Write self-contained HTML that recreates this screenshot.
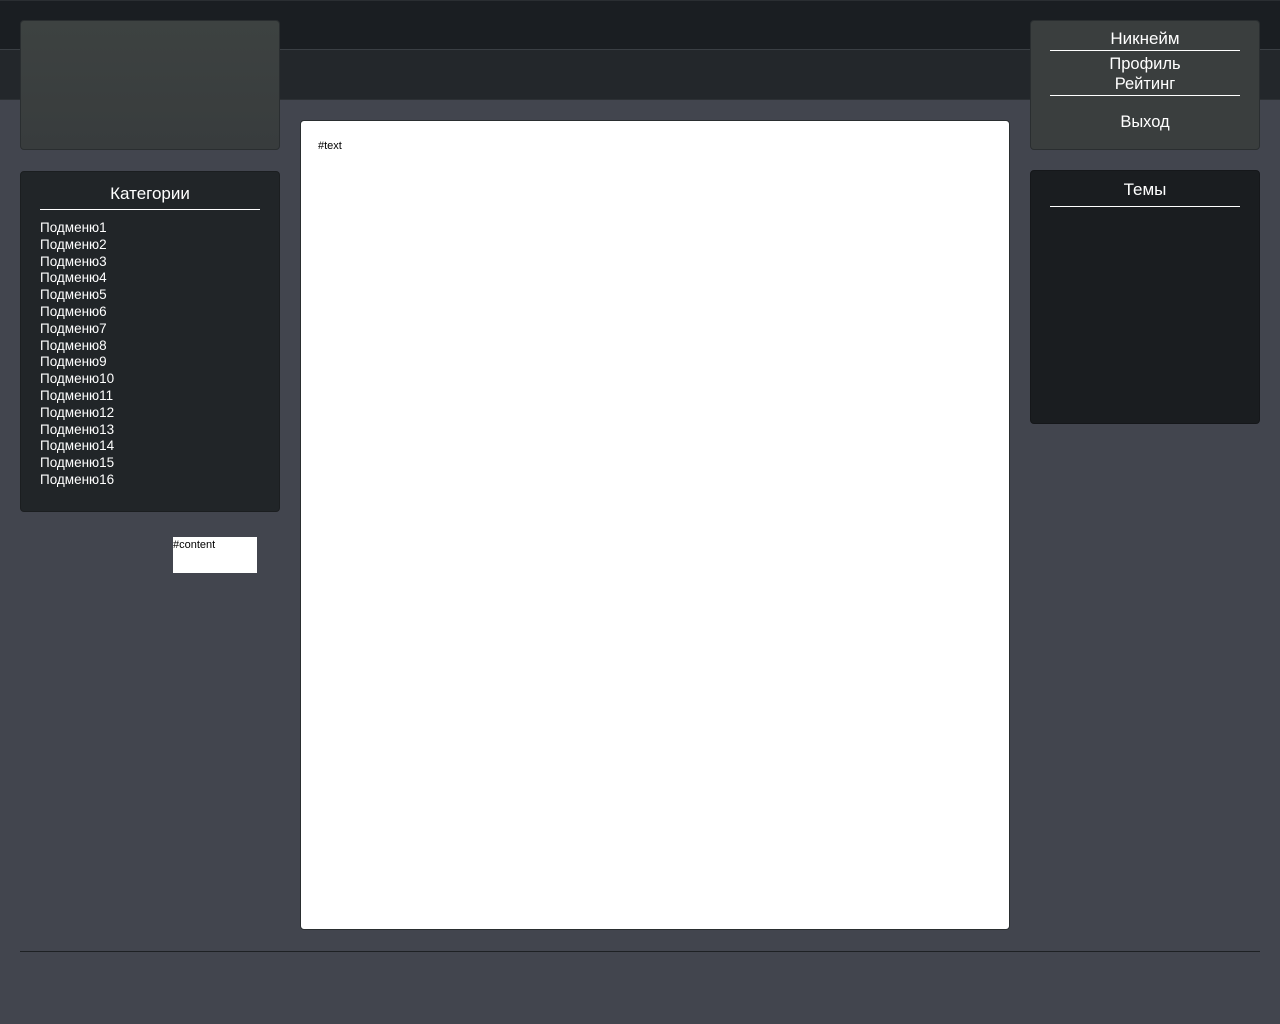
<!DOCTYPE html>
<html><head><meta charset="utf-8"><style>
*{margin:0;padding:0;box-sizing:border-box}
body{width:1280px;height:1024px;background:#42454e;position:relative;font-family:"Liberation Sans",sans-serif;color:#fff;overflow:hidden}
.a{position:absolute}
#top1{left:0;top:0;width:1280px;height:50px;background:#1a1e22;border-bottom:1px solid #3a3f44;border-top:1px solid #2a2e32}
#top2{left:0;top:50px;width:1280px;height:50px;background:#23272b;border-bottom:1px solid #2c3034}
#logo{left:20px;top:20px;width:260px;height:130px;background:linear-gradient(#3d4241,#383c3d);border:1px solid #2a2e30;border-radius:4px}
#cat{left:20px;top:171px;width:260px;height:341px;background:#212528;border:1px solid #1b1e20;border-radius:4px}
#cat h3{font-weight:normal;font-size:17px;text-align:center;margin-top:12px;line-height:20px;margin-bottom:5px}
.hr{height:1px;background:#fff;margin:0 19px}
#cat ul{list-style:none;margin:10px 0 0 19px;font-size:13.5px;line-height:16.8px}
#cont{left:173px;top:537px;width:84px;height:36px;background:#fff;color:#000;font-size:11px;line-height:16px}
#main{left:300px;top:120px;width:710px;height:810px;background:#fff;border:1px solid #2a2e30;border-radius:4px;color:#000;font-size:11px;padding:19px 17px}
#user{left:1030px;top:20px;width:230px;height:130px;background:#3a3e3e;border:1px solid #2a2e30;border-radius:4px;text-align:center;font-size:16.5px}
#them{left:1030px;top:170px;width:230px;height:254px;background:#1a1d20;border:1px solid #15171a;border-radius:4px;text-align:center}
#foot{left:20px;top:951px;width:1240px;height:1px;background:#1e2124}
</style></head><body>
<div class="a" id="top1"></div><div class="a" id="top2"></div>
<div class="a" id="logo"></div>
<div class="a" id="cat"><h3>Категории</h3><div class="hr"></div>
<ul><li>Подменю1</li><li>Подменю2</li><li>Подменю3</li><li>Подменю4</li><li>Подменю5</li><li>Подменю6</li><li>Подменю7</li><li>Подменю8</li><li>Подменю9</li><li>Подменю10</li><li>Подменю11</li><li>Подменю12</li><li>Подменю13</li><li>Подменю14</li><li>Подменю15</li><li>Подменю16</li></ul></div>
<div class="a" id="cont">#content</div>
<div class="a" id="main">#text</div>
<div class="a" id="user">
<div style="margin-top:8px;line-height:20px;font-size:17px;margin-bottom:1px">Никнейм</div>
<div class="hr"></div>
<div style="line-height:20px;margin-top:3px">Профиль</div>
<div style="line-height:20px;margin-bottom:1px">Рейтинг</div>
<div class="hr"></div>
<div style="line-height:20px;margin-top:16px">Выход</div>
</div>
<div class="a" id="them"><div style="margin-top:9px;font-size:17px;line-height:20px">Темы</div><div class="hr" style="margin-top:6px"></div></div>
<div class="a" id="foot"></div>
</body></html>
